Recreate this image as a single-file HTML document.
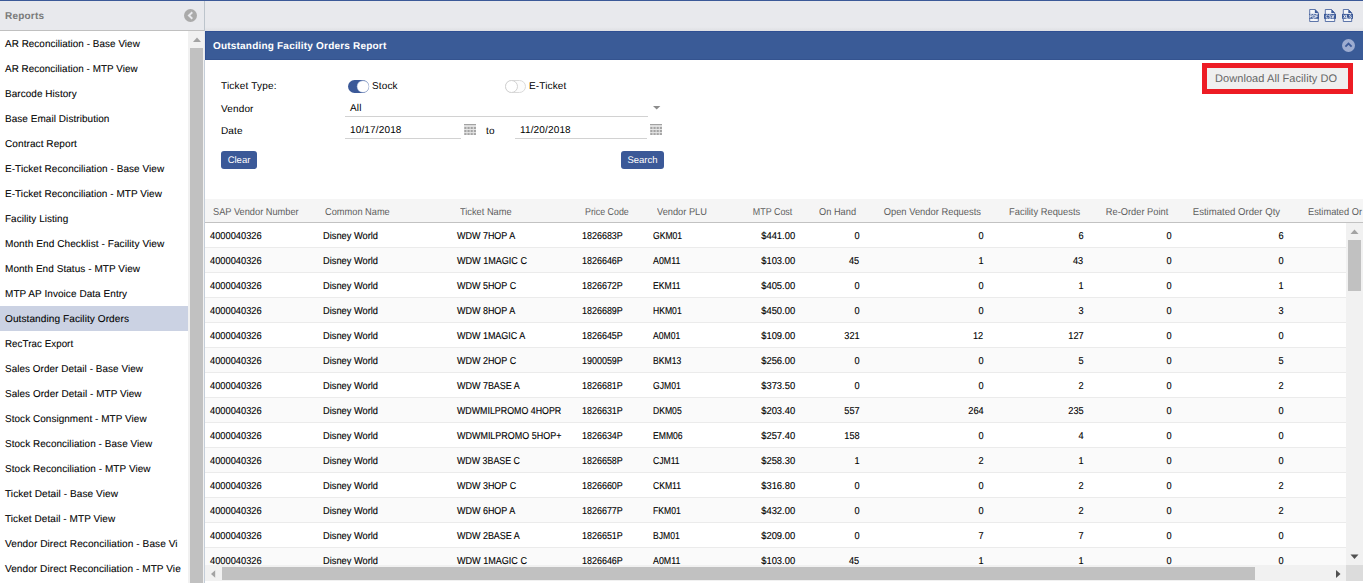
<!DOCTYPE html>
<html><head><meta charset="utf-8"><title>Outstanding Facility Orders Report</title>
<style>
html,body{margin:0;padding:0;}
body{width:1363px;height:583px;overflow:hidden;background:#fff;position:relative;font-family:"Liberation Sans",sans-serif;font-size:10px;color:#000;text-rendering:geometricPrecision;}
.abs{position:absolute;}
#topline{left:0;top:0;width:1363px;height:1px;background:#3b5998;}
#topbar{left:0;top:1px;width:1363px;height:29px;background:#e8e9ed;}
#topborder{left:0;top:30px;width:204px;height:1px;background:#c0c0c0;}
#topgrad{left:205px;top:27px;width:1158px;height:4px;background:linear-gradient(#e8e9ed,#dedfe3);}
#sideborder{left:204px;top:1px;width:1px;height:30px;background:#bcc4cc;}
#sideborder2{left:204px;top:31px;width:1px;height:29px;background:#e6e9ed;}
#sideborder3{left:204px;top:60px;width:1px;height:523px;background:#c5ced9;}
#reports{left:5px;top:10px;font-weight:bold;font-size:10px;color:#7a7a7a;line-height:13px;letter-spacing:0.2px;}
.si{position:absolute;left:0;width:188px;height:25px;line-height:25px;white-space:nowrap;overflow:hidden;font-size:10px;color:#000;-webkit-text-stroke:0.08px #000;}
.si span{position:absolute;left:5px;top:1px;letter-spacing:0.06px;transform-origin:0 50%;}
.si.sel{background:#cbd2e3;}
#sscroll{left:188px;top:31px;width:16px;height:552px;background:#f1f1f1;}
#sthumb{left:190px;top:48px;width:13px;height:535px;background:#c1c1c1;}
#titlebar{left:205px;top:31px;width:1157px;height:27px;background:#3a5b97;border-top:1px solid #2f4f93;border-left:1px solid #2f4f93;border-bottom:1px solid #34538f;}
#title{left:213px;top:40px;color:#fff;font-weight:bold;font-size:10px;line-height:13px;white-space:nowrap;letter-spacing:0.2px;}
.lbl{position:absolute;font-size:10px;line-height:13px;white-space:nowrap;color:#000;letter-spacing:0.15px;}
.uline{position:absolute;height:1px;background:#d2d2d2;}
.btn{position:absolute;background:#3b5998;color:#fff;border-radius:3px;font-size:9.5px;text-align:center;line-height:20px;height:18px;}
#dl{left:1202px;top:63px;width:141px;height:21px;border:5px solid #ed1c24;background:#efefef;color:#666;font-size:11px;line-height:22px;text-align:left;padding-left:8px;width:133px;white-space:nowrap;letter-spacing:0.07px;}
#thead{left:205px;top:199px;width:1158px;height:23px;background:#f5f5f5;}
#theadb{left:205px;top:222px;width:1158px;height:1px;background:#c2c2c2;}
.th{position:absolute;top:200px;height:25px;line-height:25px;font-size:10px;color:#5e5e5e;white-space:nowrap;}
.row{position:absolute;left:205px;width:1141px;height:24px;border-bottom:1px solid #ebebeb;}
.row.alt{background:#fafafa;}
.td{position:absolute;height:25px;line-height:25px;font-size:10px;color:#000;white-space:nowrap;-webkit-text-stroke:0.12px #000;}
.l{transform-origin:0 50%;}
.r{transform-origin:100% 50%;}
#vscroll{left:1346px;top:223px;width:17px;height:342px;background:#f1f1f1;}
#vthumb{left:1348px;top:240px;width:13px;height:51px;background:#c1c1c1;}
#hscroll{left:205px;top:565px;width:1141px;height:16px;background:#f1f1f1;}
#hthumb{left:222px;top:567px;width:1033px;height:13px;background:#c1c1c1;}
#corner{left:1346px;top:565px;width:17px;height:16px;background:#dcdcdc;}
</style></head><body>

<div class="abs" id="topline"></div><div class="abs" id="topbar"></div><div class="abs" id="topborder"></div><div class="abs" id="topgrad"></div>
<div class="abs" id="reports">Reports</div>
<svg class="abs" style="left:184px;top:9px" width="13" height="13" viewBox="0 0 13 13"><circle cx="6.5" cy="6.5" r="6.5" fill="#aaaaaa"/><path d="M8.3 3.2 L4.9 6.5 L8.3 9.8" fill="none" stroke="#e8e9ed" stroke-width="1.9"/></svg>
<div class="si" style="top:31px"><span style="transform:scaleX(0.987)">AR Reconciliation - Base View</span></div>
<div class="si" style="top:56px"><span style="transform:scaleX(0.985)">AR Reconciliation - MTP View</span></div>
<div class="si" style="top:81px"><span style="transform:scaleX(0.996)">Barcode History</span></div>
<div class="si" style="top:106px"><span style="transform:scaleX(0.997)">Base Email Distribution</span></div>
<div class="si" style="top:131px"><span style="transform:scaleX(1.006)">Contract Report</span></div>
<div class="si" style="top:156px"><span style="transform:scaleX(0.999)">E-Ticket Reconciliation - Base View</span></div>
<div class="si" style="top:181px"><span style="transform:scaleX(0.997)">E-Ticket Reconciliation - MTP View</span></div>
<div class="si" style="top:206px"><span style="transform:scaleX(0.992)">Facility Listing</span></div>
<div class="si" style="top:231px"><span style="transform:scaleX(1.008)">Month End Checklist - Facility View</span></div>
<div class="si" style="top:256px"><span style="transform:scaleX(0.999)">Month End Status - MTP View</span></div>
<div class="si" style="top:281px"><span style="transform:scaleX(0.999)">MTP AP Invoice Data Entry</span></div>
<div class="si sel" style="top:306px"><span style="transform:scaleX(1.010)">Outstanding Facility Orders</span></div>
<div class="si" style="top:331px"><span style="transform:scaleX(0.975)">RecTrac Export</span></div>
<div class="si" style="top:356px"><span style="transform:scaleX(0.989)">Sales Order Detail - Base View</span></div>
<div class="si" style="top:381px"><span style="transform:scaleX(0.993)">Sales Order Detail - MTP View</span></div>
<div class="si" style="top:406px"><span style="transform:scaleX(0.994)">Stock Consignment - MTP View</span></div>
<div class="si" style="top:431px"><span style="transform:scaleX(0.995)">Stock Reconciliation - Base View</span></div>
<div class="si" style="top:456px"><span style="transform:scaleX(0.997)">Stock Reconciliation - MTP View</span></div>
<div class="si" style="top:481px"><span style="transform:scaleX(1.008)">Ticket Detail - Base View</span></div>
<div class="si" style="top:506px"><span style="transform:scaleX(1.001)">Ticket Detail - MTP View</span></div>
<div class="si" style="top:531px"><span style="transform:scaleX(1.009)">Vendor Direct Reconciliation - Base Vi</span></div>
<div class="si" style="top:556px"><span style="transform:scaleX(1.006)">Vendor Direct Reconciliation - MTP Vie</span></div>
<div class="abs" id="sscroll"></div><div class="abs" id="sthumb"></div>
<svg class="abs" style="left:193px;top:37px" width="8" height="5" viewBox="0 0 8 5"><path d="M0 5 L4 0.5 L8 5 Z" fill="#a3a3a3"/></svg>
<div class="abs" id="sideborder"></div><div class="abs" id="sideborder2"></div><div class="abs" id="sideborder3"></div>
<svg class="abs" style="left:1309px;top:9px" width="10" height="13" viewBox="0 0 10 13"><path d="M0.7 0.5 H6.1000000000000005 L9.3 3.7 V12.5 H0.7 Z" fill="#f3f5f9" stroke="#3b5998" stroke-width="0.9" stroke-opacity="0.9"/><path d="M5.9 0.3 L9.5 3.9 H5.9 Z" fill="#3b5998"/><rect x="0" y="4.9" width="10" height="4.9" fill="#3b5998"/><g fill="none" stroke="#fff" stroke-width="0.8"><path transform="translate(1.05 5.8)" d="M0 3.4 V0 H1.3 Q2.1 0 2.1 0.9 Q2.1 1.8 1.3 1.8 H0"/><path transform="translate(3.95 5.8)" d="M0 0 V3.4 H0.9 Q2.1 3.4 2.1 1.7 Q2.1 0 0.9 0 Z"/><path transform="translate(6.85 5.8)" d="M0 3.4 V0 H2.1 M0 1.6 H1.7"/></g></svg>
<svg class="abs" style="left:1324px;top:9px" width="12" height="13" viewBox="0 0 12 13"><path d="M1.3 0.5 H7.499999999999999 L10.7 3.7 V12.5 H1.3 Z" fill="#f3f5f9" stroke="#3b5998" stroke-width="0.9" stroke-opacity="0.9"/><path d="M7.299999999999999 0.3 L10.899999999999999 3.9 H7.299999999999999 Z" fill="#3b5998"/><rect x="0" y="4.9" width="12" height="4.9" fill="#3b5998"/><g fill="none" stroke="#fff" stroke-width="0.8"><path transform="translate(2.05 5.8)" d="M2.1 0.7 Q1.8 0 1.1 0 Q0 0 0 1.7 Q0 3.4 1.1 3.4 Q1.8 3.4 2.1 2.7"/><path transform="translate(4.95 5.8)" d="M2 0.6 Q1.7 0 1.05 0 Q0.1 0 0.1 0.85 Q0.1 1.5 1.05 1.7 Q2.1 1.9 2.1 2.55 Q2.1 3.4 1.05 3.4 Q0.4 3.4 0 2.8"/><path transform="translate(7.85 5.8)" d="M0 0 L1.05 3.4 L2.1 0"/></g></svg>
<svg class="abs" style="left:1342px;top:9px" width="11" height="13" viewBox="0 0 11 13"><path d="M1.3 0.5 H6.499999999999999 L9.7 3.7 V12.5 H1.3 Z" fill="#f3f5f9" stroke="#3b5998" stroke-width="0.9" stroke-opacity="0.9"/><path d="M6.299999999999999 0.3 L9.899999999999999 3.9 H6.299999999999999 Z" fill="#3b5998"/><rect x="0" y="4.9" width="11" height="4.9" fill="#3b5998"/><g fill="none" stroke="#fff" stroke-width="0.8"><path transform="translate(1.55 5.8)" d="M0 0 L2.1 3.4 M2.1 0 L0 3.4"/><path transform="translate(4.45 5.8)" d="M0 0 V3.4 H2"/><path transform="translate(7.35 5.8)" d="M2 0.6 Q1.7 0 1.05 0 Q0.1 0 0.1 0.85 Q0.1 1.5 1.05 1.7 Q2.1 1.9 2.1 2.55 Q2.1 3.4 1.05 3.4 Q0.4 3.4 0 2.8"/></g></svg>
<div class="abs" id="titlebar"></div><div class="abs" id="title">Outstanding Facility Orders Report</div>
<svg class="abs" style="left:1342px;top:39px" width="13" height="13" viewBox="0 0 13 13"><circle cx="6.5" cy="6.5" r="6.5" fill="#9dacd0"/><path d="M3.4 7.6 L6.5 4.5 L9.6 7.6" fill="none" stroke="#3b5998" stroke-width="1.8"/></svg>
<div class="lbl" style="left:221px;top:80px;letter-spacing:0.2px">Ticket Type:</div>
<div class="lbl" style="left:221px;top:103px">Vendor</div>
<div class="lbl" style="left:221px;top:125px">Date</div>
<svg class="abs" style="left:348px;top:80px" width="22" height="13" viewBox="0 0 22 13"><rect x="0" y="0" width="21" height="13" rx="6.5" fill="#3b5998"/><circle cx="15" cy="6.5" r="6.2" fill="#9fb0d3"/><circle cx="15" cy="6.5" r="5.6" fill="#fff"/></svg>
<div class="lbl" style="left:372px;top:80px">Stock</div>
<svg class="abs" style="left:505px;top:80px" width="22" height="13" viewBox="0 0 22 13"><rect x="0.5" y="0.5" width="20" height="12" rx="6" fill="#fcfcfc" stroke="#dadada"/><circle cx="6.5" cy="6.5" r="6" fill="#fff" stroke="#d2d2d2"/></svg>
<div class="lbl" style="left:529px;top:80px">E-Ticket</div>
<div class="lbl" style="left:350px;top:102px">All</div>
<div class="uline" style="left:345px;top:116px;width:303px"></div>
<svg class="abs" style="left:653.3px;top:106px" width="7.4" height="3.6" viewBox="0 0 7.4 3.6"><path d="M0 0 H7.4 L3.7 3.6 Z" fill="#8c8c8c"/></svg>
<div class="lbl" style="left:350px;top:124px">10/17/2018</div>
<div class="uline" style="left:345px;top:138px;width:116px"></div>
<div class="lbl" style="left:486px;top:125px">to</div>
<div class="lbl" style="left:520px;top:124px">11/20/2018</div>
<div class="uline" style="left:515px;top:138px;width:132px"></div>
<svg class="abs" style="left:464px;top:124px" width="12.3" height="11.4" viewBox="0 0 12.3 11.4"><rect x="0" y="0" width="12.3" height="1.5" fill="#a2a2a2"/><rect x="0" y="1.5" width="12.3" height="9.9" fill="#e6e6e6"/><g fill="#a4a4a4"><rect x="0.3" y="2.9" width="2.2" height="2.1"/><rect x="3.45" y="2.9" width="2.2" height="2.1"/><rect x="6.6" y="2.9" width="2.2" height="2.1"/><rect x="9.75" y="2.9" width="2.2" height="2.1"/><rect x="0.3" y="6" width="2.2" height="2.1"/><rect x="3.45" y="6" width="2.2" height="2.1"/><rect x="6.6" y="6" width="2.2" height="2.1"/><rect x="9.75" y="6" width="2.2" height="2.1"/><rect x="0.3" y="9.1" width="2.2" height="2.1"/><rect x="3.45" y="9.1" width="2.2" height="2.1"/><rect x="6.6" y="9.1" width="2.2" height="2.1"/><rect x="9.75" y="9.1" width="2.2" height="2.1"/></g></svg>
<svg class="abs" style="left:650px;top:124px" width="12.3" height="11.4" viewBox="0 0 12.3 11.4"><rect x="0" y="0" width="12.3" height="1.5" fill="#a2a2a2"/><rect x="0" y="1.5" width="12.3" height="9.9" fill="#e6e6e6"/><g fill="#a4a4a4"><rect x="0.3" y="2.9" width="2.2" height="2.1"/><rect x="3.45" y="2.9" width="2.2" height="2.1"/><rect x="6.6" y="2.9" width="2.2" height="2.1"/><rect x="9.75" y="2.9" width="2.2" height="2.1"/><rect x="0.3" y="6" width="2.2" height="2.1"/><rect x="3.45" y="6" width="2.2" height="2.1"/><rect x="6.6" y="6" width="2.2" height="2.1"/><rect x="9.75" y="6" width="2.2" height="2.1"/><rect x="0.3" y="9.1" width="2.2" height="2.1"/><rect x="3.45" y="9.1" width="2.2" height="2.1"/><rect x="6.6" y="9.1" width="2.2" height="2.1"/><rect x="9.75" y="9.1" width="2.2" height="2.1"/></g></svg>
<div class="btn" style="left:221px;top:151px;width:36px">Clear</div>
<div class="btn" style="left:621px;top:151px;width:43px">Search</div>
<div class="abs" id="dl">Download All Facility DO</div>
<div class="abs" id="thead"></div><div class="abs" id="theadb"></div>
<div class="th l" style="left:213px;transform:scaleX(0.9250)">SAP Vendor Number</div>
<div class="th l" style="left:325px;transform:scaleX(0.9250)">Common Name</div>
<div class="th l" style="left:460px;transform:scaleX(0.9250)">Ticket Name</div>
<div class="th l" style="left:585px;transform:scaleX(0.8850)">Price Code</div>
<div class="th l" style="left:657px;transform:scaleX(0.9250)">Vendor PLU</div>
<div class="th r" style="right:571px;transform:scaleX(0.8910)">MTP Cost</div>
<div class="th r" style="right:506.5px;transform:scaleX(0.9250)">On Hand</div>
<div class="th r" style="right:382.5px;transform:scaleX(0.9360)">Open Vendor Requests</div>
<div class="th r" style="right:282.5px;transform:scaleX(0.9330)">Facility Requests</div>
<div class="th r" style="right:195px;transform:scaleX(0.9280)">Re-Order Point</div>
<div class="th r" style="right:82.5px;transform:scaleX(0.9590)">Estimated Order Qty</div>
<div class="th l" style="left:1308px;transform:scaleX(0.9250)">Estimated Or</div>
<div class="row" style="top:223px"></div>
<div class="td l" style="left:210px;top:224px;transform:scaleX(0.9290)">4000040326</div>
<div class="td l" style="left:323.2px;top:224px;transform:scaleX(0.9270)">Disney World</div>
<div class="td l" style="left:457px;top:224px;transform:scaleX(0.8970)">WDW 7HOP A</div>
<div class="td l" style="left:581.6px;top:224px;transform:scaleX(0.8950)">1826683P</div>
<div class="td l" style="left:653.1px;top:224px;transform:scaleX(0.8600)">GKM01</div>
<div class="td r" style="right:568px;top:224px;transform:scaleX(0.9400)">$441.00</div>
<div class="td r" style="right:503.70000000000005px;top:224px;transform:scaleX(0.9200)">0</div>
<div class="td r" style="right:379.70000000000005px;top:224px;transform:scaleX(0.9200)">0</div>
<div class="td r" style="right:279.70000000000005px;top:224px;transform:scaleX(0.9200)">6</div>
<div class="td r" style="right:191.70000000000005px;top:224px;transform:scaleX(0.9200)">0</div>
<div class="td r" style="right:79.70000000000005px;top:224px;transform:scaleX(0.9200)">6</div>
<div class="row alt" style="top:248px"></div>
<div class="td l" style="left:210px;top:249px;transform:scaleX(0.9290)">4000040326</div>
<div class="td l" style="left:323.2px;top:249px;transform:scaleX(0.9270)">Disney World</div>
<div class="td l" style="left:457px;top:249px;transform:scaleX(0.9060)">WDW 1MAGIC C</div>
<div class="td l" style="left:581.6px;top:249px;transform:scaleX(0.8950)">1826646P</div>
<div class="td l" style="left:653.1px;top:249px;transform:scaleX(0.8850)">A0M11</div>
<div class="td r" style="right:568px;top:249px;transform:scaleX(0.9400)">$103.00</div>
<div class="td r" style="right:503.70000000000005px;top:249px;transform:scaleX(0.9200)">45</div>
<div class="td r" style="right:379.70000000000005px;top:249px;transform:scaleX(0.9200)">1</div>
<div class="td r" style="right:279.70000000000005px;top:249px;transform:scaleX(0.9200)">43</div>
<div class="td r" style="right:191.70000000000005px;top:249px;transform:scaleX(0.9200)">0</div>
<div class="td r" style="right:79.70000000000005px;top:249px;transform:scaleX(0.9200)">0</div>
<div class="row" style="top:273px"></div>
<div class="td l" style="left:210px;top:274px;transform:scaleX(0.9290)">4000040326</div>
<div class="td l" style="left:323.2px;top:274px;transform:scaleX(0.9270)">Disney World</div>
<div class="td l" style="left:457px;top:274px;transform:scaleX(0.8970)">WDW 5HOP C</div>
<div class="td l" style="left:581.6px;top:274px;transform:scaleX(0.8950)">1826672P</div>
<div class="td l" style="left:653.1px;top:274px;transform:scaleX(0.8600)">EKM11</div>
<div class="td r" style="right:568px;top:274px;transform:scaleX(0.9400)">$405.00</div>
<div class="td r" style="right:503.70000000000005px;top:274px;transform:scaleX(0.9200)">0</div>
<div class="td r" style="right:379.70000000000005px;top:274px;transform:scaleX(0.9200)">0</div>
<div class="td r" style="right:279.70000000000005px;top:274px;transform:scaleX(0.9200)">1</div>
<div class="td r" style="right:191.70000000000005px;top:274px;transform:scaleX(0.9200)">0</div>
<div class="td r" style="right:79.70000000000005px;top:274px;transform:scaleX(0.9200)">1</div>
<div class="row alt" style="top:298px"></div>
<div class="td l" style="left:210px;top:299px;transform:scaleX(0.9290)">4000040326</div>
<div class="td l" style="left:323.2px;top:299px;transform:scaleX(0.9270)">Disney World</div>
<div class="td l" style="left:457px;top:299px;transform:scaleX(0.8970)">WDW 8HOP A</div>
<div class="td l" style="left:581.6px;top:299px;transform:scaleX(0.8950)">1826689P</div>
<div class="td l" style="left:653.1px;top:299px;transform:scaleX(0.8600)">HKM01</div>
<div class="td r" style="right:568px;top:299px;transform:scaleX(0.9400)">$450.00</div>
<div class="td r" style="right:503.70000000000005px;top:299px;transform:scaleX(0.9200)">0</div>
<div class="td r" style="right:379.70000000000005px;top:299px;transform:scaleX(0.9200)">0</div>
<div class="td r" style="right:279.70000000000005px;top:299px;transform:scaleX(0.9200)">3</div>
<div class="td r" style="right:191.70000000000005px;top:299px;transform:scaleX(0.9200)">0</div>
<div class="td r" style="right:79.70000000000005px;top:299px;transform:scaleX(0.9200)">3</div>
<div class="row" style="top:323px"></div>
<div class="td l" style="left:210px;top:324px;transform:scaleX(0.9290)">4000040326</div>
<div class="td l" style="left:323.2px;top:324px;transform:scaleX(0.9270)">Disney World</div>
<div class="td l" style="left:457px;top:324px;transform:scaleX(0.8970)">WDW 1MAGIC A</div>
<div class="td l" style="left:581.6px;top:324px;transform:scaleX(0.8950)">1826645P</div>
<div class="td l" style="left:653.1px;top:324px;transform:scaleX(0.8600)">A0M01</div>
<div class="td r" style="right:568px;top:324px;transform:scaleX(0.9400)">$109.00</div>
<div class="td r" style="right:503.70000000000005px;top:324px;transform:scaleX(0.9200)">321</div>
<div class="td r" style="right:379.70000000000005px;top:324px;transform:scaleX(0.9200)">12</div>
<div class="td r" style="right:279.70000000000005px;top:324px;transform:scaleX(0.9200)">127</div>
<div class="td r" style="right:191.70000000000005px;top:324px;transform:scaleX(0.9200)">0</div>
<div class="td r" style="right:79.70000000000005px;top:324px;transform:scaleX(0.9200)">0</div>
<div class="row alt" style="top:348px"></div>
<div class="td l" style="left:210px;top:349px;transform:scaleX(0.9290)">4000040326</div>
<div class="td l" style="left:323.2px;top:349px;transform:scaleX(0.9270)">Disney World</div>
<div class="td l" style="left:457px;top:349px;transform:scaleX(0.8970)">WDW 2HOP C</div>
<div class="td l" style="left:581.6px;top:349px;transform:scaleX(0.8950)">1900059P</div>
<div class="td l" style="left:653.1px;top:349px;transform:scaleX(0.8600)">BKM13</div>
<div class="td r" style="right:568px;top:349px;transform:scaleX(0.9400)">$256.00</div>
<div class="td r" style="right:503.70000000000005px;top:349px;transform:scaleX(0.9200)">0</div>
<div class="td r" style="right:379.70000000000005px;top:349px;transform:scaleX(0.9200)">0</div>
<div class="td r" style="right:279.70000000000005px;top:349px;transform:scaleX(0.9200)">5</div>
<div class="td r" style="right:191.70000000000005px;top:349px;transform:scaleX(0.9200)">0</div>
<div class="td r" style="right:79.70000000000005px;top:349px;transform:scaleX(0.9200)">5</div>
<div class="row" style="top:373px"></div>
<div class="td l" style="left:210px;top:374px;transform:scaleX(0.9290)">4000040326</div>
<div class="td l" style="left:323.2px;top:374px;transform:scaleX(0.9270)">Disney World</div>
<div class="td l" style="left:457px;top:374px;transform:scaleX(0.8970)">WDW 7BASE A</div>
<div class="td l" style="left:581.6px;top:374px;transform:scaleX(0.8950)">1826681P</div>
<div class="td l" style="left:653.1px;top:374px;transform:scaleX(0.8600)">GJM01</div>
<div class="td r" style="right:568px;top:374px;transform:scaleX(0.9400)">$373.50</div>
<div class="td r" style="right:503.70000000000005px;top:374px;transform:scaleX(0.9200)">0</div>
<div class="td r" style="right:379.70000000000005px;top:374px;transform:scaleX(0.9200)">0</div>
<div class="td r" style="right:279.70000000000005px;top:374px;transform:scaleX(0.9200)">2</div>
<div class="td r" style="right:191.70000000000005px;top:374px;transform:scaleX(0.9200)">0</div>
<div class="td r" style="right:79.70000000000005px;top:374px;transform:scaleX(0.9200)">2</div>
<div class="row alt" style="top:398px"></div>
<div class="td l" style="left:210px;top:399px;transform:scaleX(0.9290)">4000040326</div>
<div class="td l" style="left:323.2px;top:399px;transform:scaleX(0.9270)">Disney World</div>
<div class="td l" style="left:457px;top:399px;transform:scaleX(0.8850)">WDWMILPROMO 4HOPR</div>
<div class="td l" style="left:581.6px;top:399px;transform:scaleX(0.8950)">1826631P</div>
<div class="td l" style="left:653.1px;top:399px;transform:scaleX(0.8600)">DKM05</div>
<div class="td r" style="right:568px;top:399px;transform:scaleX(0.9400)">$203.40</div>
<div class="td r" style="right:503.70000000000005px;top:399px;transform:scaleX(0.9200)">557</div>
<div class="td r" style="right:379.70000000000005px;top:399px;transform:scaleX(0.9200)">264</div>
<div class="td r" style="right:279.70000000000005px;top:399px;transform:scaleX(0.9200)">235</div>
<div class="td r" style="right:191.70000000000005px;top:399px;transform:scaleX(0.9200)">0</div>
<div class="td r" style="right:79.70000000000005px;top:399px;transform:scaleX(0.9200)">0</div>
<div class="row" style="top:423px"></div>
<div class="td l" style="left:210px;top:424px;transform:scaleX(0.9290)">4000040326</div>
<div class="td l" style="left:323.2px;top:424px;transform:scaleX(0.9270)">Disney World</div>
<div class="td l" style="left:457px;top:424px;transform:scaleX(0.8970)">WDWMILPROMO 5HOP+</div>
<div class="td l" style="left:581.6px;top:424px;transform:scaleX(0.8950)">1826634P</div>
<div class="td l" style="left:653.1px;top:424px;transform:scaleX(0.8600)">EMM06</div>
<div class="td r" style="right:568px;top:424px;transform:scaleX(0.9400)">$257.40</div>
<div class="td r" style="right:503.70000000000005px;top:424px;transform:scaleX(0.9200)">158</div>
<div class="td r" style="right:379.70000000000005px;top:424px;transform:scaleX(0.9200)">0</div>
<div class="td r" style="right:279.70000000000005px;top:424px;transform:scaleX(0.9200)">4</div>
<div class="td r" style="right:191.70000000000005px;top:424px;transform:scaleX(0.9200)">0</div>
<div class="td r" style="right:79.70000000000005px;top:424px;transform:scaleX(0.9200)">0</div>
<div class="row alt" style="top:448px"></div>
<div class="td l" style="left:210px;top:449px;transform:scaleX(0.9290)">4000040326</div>
<div class="td l" style="left:323.2px;top:449px;transform:scaleX(0.9270)">Disney World</div>
<div class="td l" style="left:457px;top:449px;transform:scaleX(0.8850)">WDW 3BASE C</div>
<div class="td l" style="left:581.6px;top:449px;transform:scaleX(0.8950)">1826658P</div>
<div class="td l" style="left:653.1px;top:449px;transform:scaleX(0.8600)">CJM11</div>
<div class="td r" style="right:568px;top:449px;transform:scaleX(0.9400)">$258.30</div>
<div class="td r" style="right:503.70000000000005px;top:449px;transform:scaleX(0.9200)">1</div>
<div class="td r" style="right:379.70000000000005px;top:449px;transform:scaleX(0.9200)">2</div>
<div class="td r" style="right:279.70000000000005px;top:449px;transform:scaleX(0.9200)">1</div>
<div class="td r" style="right:191.70000000000005px;top:449px;transform:scaleX(0.9200)">0</div>
<div class="td r" style="right:79.70000000000005px;top:449px;transform:scaleX(0.9200)">0</div>
<div class="row" style="top:473px"></div>
<div class="td l" style="left:210px;top:474px;transform:scaleX(0.9290)">4000040326</div>
<div class="td l" style="left:323.2px;top:474px;transform:scaleX(0.9270)">Disney World</div>
<div class="td l" style="left:457px;top:474px;transform:scaleX(0.8970)">WDW 3HOP C</div>
<div class="td l" style="left:581.6px;top:474px;transform:scaleX(0.8950)">1826660P</div>
<div class="td l" style="left:653.1px;top:474px;transform:scaleX(0.8600)">CKM11</div>
<div class="td r" style="right:568px;top:474px;transform:scaleX(0.9400)">$316.80</div>
<div class="td r" style="right:503.70000000000005px;top:474px;transform:scaleX(0.9200)">0</div>
<div class="td r" style="right:379.70000000000005px;top:474px;transform:scaleX(0.9200)">0</div>
<div class="td r" style="right:279.70000000000005px;top:474px;transform:scaleX(0.9200)">2</div>
<div class="td r" style="right:191.70000000000005px;top:474px;transform:scaleX(0.9200)">0</div>
<div class="td r" style="right:79.70000000000005px;top:474px;transform:scaleX(0.9200)">2</div>
<div class="row alt" style="top:498px"></div>
<div class="td l" style="left:210px;top:499px;transform:scaleX(0.9290)">4000040326</div>
<div class="td l" style="left:323.2px;top:499px;transform:scaleX(0.9270)">Disney World</div>
<div class="td l" style="left:457px;top:499px;transform:scaleX(0.8970)">WDW 6HOP A</div>
<div class="td l" style="left:581.6px;top:499px;transform:scaleX(0.8950)">1826677P</div>
<div class="td l" style="left:653.1px;top:499px;transform:scaleX(0.8600)">FKM01</div>
<div class="td r" style="right:568px;top:499px;transform:scaleX(0.9400)">$432.00</div>
<div class="td r" style="right:503.70000000000005px;top:499px;transform:scaleX(0.9200)">0</div>
<div class="td r" style="right:379.70000000000005px;top:499px;transform:scaleX(0.9200)">0</div>
<div class="td r" style="right:279.70000000000005px;top:499px;transform:scaleX(0.9200)">2</div>
<div class="td r" style="right:191.70000000000005px;top:499px;transform:scaleX(0.9200)">0</div>
<div class="td r" style="right:79.70000000000005px;top:499px;transform:scaleX(0.9200)">2</div>
<div class="row" style="top:523px"></div>
<div class="td l" style="left:210px;top:524px;transform:scaleX(0.9290)">4000040326</div>
<div class="td l" style="left:323.2px;top:524px;transform:scaleX(0.9270)">Disney World</div>
<div class="td l" style="left:457px;top:524px;transform:scaleX(0.8970)">WDW 2BASE A</div>
<div class="td l" style="left:581.6px;top:524px;transform:scaleX(0.8950)">1826651P</div>
<div class="td l" style="left:653.1px;top:524px;transform:scaleX(0.8600)">BJM01</div>
<div class="td r" style="right:568px;top:524px;transform:scaleX(0.9400)">$209.00</div>
<div class="td r" style="right:503.70000000000005px;top:524px;transform:scaleX(0.9200)">0</div>
<div class="td r" style="right:379.70000000000005px;top:524px;transform:scaleX(0.9200)">7</div>
<div class="td r" style="right:279.70000000000005px;top:524px;transform:scaleX(0.9200)">7</div>
<div class="td r" style="right:191.70000000000005px;top:524px;transform:scaleX(0.9200)">0</div>
<div class="td r" style="right:79.70000000000005px;top:524px;transform:scaleX(0.9200)">0</div>
<div class="row alt" style="top:548px"></div>
<div class="td l" style="left:210px;top:549px;transform:scaleX(0.9290)">4000040326</div>
<div class="td l" style="left:323.2px;top:549px;transform:scaleX(0.9270)">Disney World</div>
<div class="td l" style="left:457px;top:549px;transform:scaleX(0.9060)">WDW 1MAGIC C</div>
<div class="td l" style="left:581.6px;top:549px;transform:scaleX(0.8950)">1826646P</div>
<div class="td l" style="left:653.1px;top:549px;transform:scaleX(0.8850)">A0M11</div>
<div class="td r" style="right:568px;top:549px;transform:scaleX(0.9400)">$103.00</div>
<div class="td r" style="right:503.70000000000005px;top:549px;transform:scaleX(0.9200)">45</div>
<div class="td r" style="right:379.70000000000005px;top:549px;transform:scaleX(0.9200)">1</div>
<div class="td r" style="right:279.70000000000005px;top:549px;transform:scaleX(0.9200)">1</div>
<div class="td r" style="right:191.70000000000005px;top:549px;transform:scaleX(0.9200)">0</div>
<div class="td r" style="right:79.70000000000005px;top:549px;transform:scaleX(0.9200)">0</div>
<div class="abs" id="vscroll"></div><div class="abs" id="vthumb"></div>
<svg class="abs" style="left:1350px;top:229px" width="9" height="5" viewBox="0 0 9 5"><path d="M0.5 5 L4.5 0.5 L8.5 5 Z" fill="#a3a3a3"/></svg>
<svg class="abs" style="left:1350px;top:553.5px" width="9" height="5" viewBox="0 0 9 5"><path d="M0.5 0.5 L4.5 5 L8.5 0.5 Z" fill="#505050"/></svg>
<div class="abs" id="hscroll"></div><div class="abs" id="hthumb"></div><div class="abs" id="corner"></div>
<svg class="abs" style="left:211px;top:570px" width="5" height="8" viewBox="0 0 5 8"><path d="M4.2 0.3 L0 4 L4.2 7.7 Z" fill="#a3a3a3"/></svg>
<svg class="abs" style="left:1336px;top:570px" width="5" height="8" viewBox="0 0 5 8"><path d="M0 0 L4.5 4 L0 8 Z" fill="#505050"/></svg>
</body></html>
